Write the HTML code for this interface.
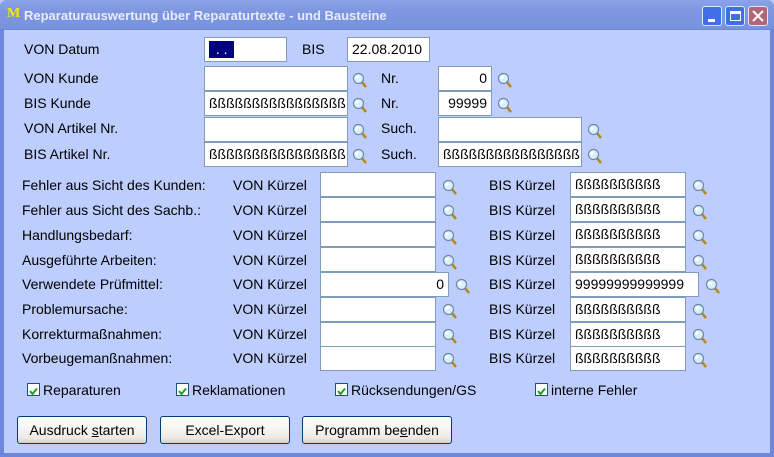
<!DOCTYPE html>
<html><head><meta charset="utf-8"><style>
*{margin:0;padding:0;box-sizing:border-box}
body{width:774px;height:457px;overflow:hidden;font-family:"Liberation Sans",Arial,sans-serif;font-size:14px;color:#000;background:#bccbfc}
.win{position:absolute;left:0;top:0;width:774px;height:457px;background:#bdcdfd;border:4px solid #6f86dc;border-top:0;border-radius:7px 7px 0 0}
.tb{position:absolute;left:0;top:0;width:774px;height:30px;background:linear-gradient(#8aa3e8,#7d96df 40%,#7893dd);border-radius:7px 7px 0 0;border-bottom:1px solid #6e86d6}
.tt{position:absolute;left:24px;top:8px;color:#e6ecfb;font-weight:bold;font-size:13px}
.logo{position:absolute;left:7px;top:6px;color:#f8e800;font-family:"Liberation Serif",serif;font-weight:bold;font-size:14px}
.b{position:absolute;top:6px;width:20px;height:20px;border:1px solid #dfe6fb;border-radius:3px;background:#3f6ee6}
.t{position:absolute;white-space:nowrap;line-height:16px}
.i{position:absolute;background:#fff;border:1px solid #7f9db9;height:25px;line-height:23px;padding:0 4px;white-space:nowrap;overflow:hidden;font-size:14px}
.r{text-align:right}
.m{position:absolute;width:16px;height:16px}
.cb{position:absolute;width:13px;height:13px;border:1px solid #1c5180;background:#fff}
.btn{position:absolute;top:416px;height:28px;border:1px solid #003c74;border-radius:3px;background:linear-gradient(#fff,#ecebe6 80%,#d6d0c5);text-align:center;line-height:26px;font-size:14px}
</style></head><body>
<div class="win"></div>
<div class="tb"><span class="logo">M</span><span class="tt">Reparaturauswertung über Reparaturtexte - und Bausteine</span>
<div class="b" style="left:702px"><div style="position:absolute;left:5px;top:12px;width:7px;height:3px;background:#fff"></div></div>
<div class="b" style="left:725px"><div style="position:absolute;left:4px;top:4px;width:11px;height:10px;border:1px solid #fff;border-top-width:3px"></div></div>
<div class="b" style="left:748px;background:#b36676"><svg width="18" height="18" style="position:absolute;left:0;top:0"><path d="M4 4L14 14M14 4L4 14" stroke="#fff" stroke-width="2"/></svg></div>
</div>
<svg width="0" height="0" style="position:absolute"><defs><g id="mg"><line x1="9" y1="9" x2="14" y2="15" stroke="#b8860b" stroke-width="2.5"/><circle cx="6.5" cy="6.5" r="5" fill="#dbeefb" stroke="#6a8aa8" stroke-width="1.2"/><circle cx="5" cy="5" r="1.8" fill="#fff"/></g></defs></svg>

<span class="t" style="left:24px;top:41px">VON Datum</span>
<div class="i" style="left:204px;top:37px;width:83px;height:25px"><span style="background:#000080;color:#fff;padding:0 3px;display:inline-block;line-height:17px;margin-top:3px;vertical-align:top">&nbsp;. .&nbsp;</span></div>
<span class="t" style="left:302px;top:41px">BIS</span>
<div class="i" style="left:347px;top:37px;width:83px">22.08.2010</div>

<span class="t" style="left:24px;top:70px">VON Kunde</span>
<div class="i" style="left:204px;top:66px;width:144px"></div>
<svg class="m" style="left:352px;top:72px"><use href="#mg"/></svg>
<span class="t" style="left:381px;top:70px">Nr.</span>
<div class="i r" style="left:438px;top:66px;width:54px">0</div>
<svg class="m" style="left:497px;top:72px"><use href="#mg"/></svg>

<span class="t" style="left:24px;top:95px">BIS Kunde</span>
<div class="i" style="left:204px;top:91px;width:144px">ßßßßßßßßßßßßßßßß</div>
<svg class="m" style="left:352px;top:97px"><use href="#mg"/></svg>
<span class="t" style="left:381px;top:95px">Nr.</span>
<div class="i r" style="left:438px;top:91px;width:54px">99999</div>
<svg class="m" style="left:497px;top:97px"><use href="#mg"/></svg>

<span class="t" style="left:24px;top:120px">VON Artikel Nr.</span>
<div class="i" style="left:204px;top:117px;width:144px"></div>
<svg class="m" style="left:352px;top:123px"><use href="#mg"/></svg>
<span class="t" style="left:381px;top:120px">Such.</span>
<div class="i" style="left:438px;top:117px;width:144px"></div>
<svg class="m" style="left:587px;top:123px"><use href="#mg"/></svg>

<span class="t" style="left:24px;top:146px">BIS Artikel Nr.</span>
<div class="i" style="left:204px;top:142px;width:144px">ßßßßßßßßßßßßßßßß</div>
<svg class="m" style="left:352px;top:148px"><use href="#mg"/></svg>
<span class="t" style="left:381px;top:146px">Such.</span>
<div class="i" style="left:438px;top:142px;width:144px">ßßßßßßßßßßßßßßßß</div>
<svg class="m" style="left:587px;top:148px"><use href="#mg"/></svg>

<!-- error rows -->
<div id="rows"></div>
<span class="t" style="left:22px;top:177px">Fehler aus Sicht des Kunden:</span>
<span class="t" style="left:22px;top:202px">Fehler aus Sicht des Sachb.:</span>
<span class="t" style="left:22px;top:227px">Handlungsbedarf:</span>
<span class="t" style="left:22px;top:252px">Ausgeführte Arbeiten:</span>
<span class="t" style="left:22px;top:276px">Verwendete Prüfmittel:</span>
<span class="t" style="left:22px;top:301px">Problemursache:</span>
<span class="t" style="left:22px;top:326px">Korrekturmaßnahmen:</span>
<span class="t" style="left:22px;top:350px">Vorbeugemanßnahmen:</span>

<span class="t" style="left:233px;top:177px">VON Kürzel</span><div class="i" style="left:320px;top:172px;width:116px"></div><svg class="m" style="left:442px;top:179px"><use href="#mg"/></svg>
<span class="t" style="left:489px;top:177px">BIS Kürzel</span><div class="i" style="left:570px;top:172px;width:116px">ßßßßßßßßßß</div><svg class="m" style="left:692px;top:179px"><use href="#mg"/></svg>

<span class="t" style="left:233px;top:202px">VON Kürzel</span><div class="i" style="left:320px;top:197px;width:116px"></div><svg class="m" style="left:442px;top:204px"><use href="#mg"/></svg>
<span class="t" style="left:489px;top:202px">BIS Kürzel</span><div class="i" style="left:570px;top:197px;width:116px">ßßßßßßßßßß</div><svg class="m" style="left:692px;top:204px"><use href="#mg"/></svg>

<span class="t" style="left:233px;top:227px">VON Kürzel</span><div class="i" style="left:320px;top:222px;width:116px"></div><svg class="m" style="left:442px;top:229px"><use href="#mg"/></svg>
<span class="t" style="left:489px;top:227px">BIS Kürzel</span><div class="i" style="left:570px;top:222px;width:116px">ßßßßßßßßßß</div><svg class="m" style="left:692px;top:229px"><use href="#mg"/></svg>

<span class="t" style="left:233px;top:252px">VON Kürzel</span><div class="i" style="left:320px;top:247px;width:116px"></div><svg class="m" style="left:442px;top:254px"><use href="#mg"/></svg>
<span class="t" style="left:489px;top:252px">BIS Kürzel</span><div class="i" style="left:570px;top:247px;width:116px">ßßßßßßßßßß</div><svg class="m" style="left:692px;top:254px"><use href="#mg"/></svg>

<span class="t" style="left:233px;top:276px">VON Kürzel</span><div class="i r" style="left:320px;top:272px;width:129px">0</div><svg class="m" style="left:455px;top:278px"><use href="#mg"/></svg>
<span class="t" style="left:489px;top:276px">BIS Kürzel</span><div class="i" style="left:570px;top:272px;width:129px">99999999999999</div><svg class="m" style="left:705px;top:278px"><use href="#mg"/></svg>

<span class="t" style="left:233px;top:301px">VON Kürzel</span><div class="i" style="left:320px;top:297px;width:116px"></div><svg class="m" style="left:442px;top:303px"><use href="#mg"/></svg>
<span class="t" style="left:489px;top:301px">BIS Kürzel</span><div class="i" style="left:570px;top:297px;width:116px">ßßßßßßßßßß</div><svg class="m" style="left:692px;top:303px"><use href="#mg"/></svg>

<span class="t" style="left:233px;top:326px">VON Kürzel</span><div class="i" style="left:320px;top:322px;width:116px"></div><svg class="m" style="left:442px;top:328px"><use href="#mg"/></svg>
<span class="t" style="left:489px;top:326px">BIS Kürzel</span><div class="i" style="left:570px;top:322px;width:116px">ßßßßßßßßßß</div><svg class="m" style="left:692px;top:328px"><use href="#mg"/></svg>

<span class="t" style="left:233px;top:350px">VON Kürzel</span><div class="i" style="left:320px;top:346px;width:116px"></div><svg class="m" style="left:442px;top:352px"><use href="#mg"/></svg>
<span class="t" style="left:489px;top:350px">BIS Kürzel</span><div class="i" style="left:570px;top:346px;width:116px">ßßßßßßßßßß</div><svg class="m" style="left:692px;top:352px"><use href="#mg"/></svg>

<div class="cb" style="left:27px;top:383px"><svg width="11" height="11"><path d="M2 5L4.5 8L9 2.5" stroke="#21a121" stroke-width="2" fill="none"/></svg></div><span class="t" style="left:43px;top:382px">Reparaturen</span>
<div class="cb" style="left:176px;top:383px"><svg width="11" height="11"><path d="M2 5L4.5 8L9 2.5" stroke="#21a121" stroke-width="2" fill="none"/></svg></div><span class="t" style="left:192px;top:382px">Reklamationen</span>
<div class="cb" style="left:335px;top:383px"><svg width="11" height="11"><path d="M2 5L4.5 8L9 2.5" stroke="#21a121" stroke-width="2" fill="none"/></svg></div><span class="t" style="left:351px;top:382px">Rücksendungen/GS</span>
<div class="cb" style="left:535px;top:383px"><svg width="11" height="11"><path d="M2 5L4.5 8L9 2.5" stroke="#21a121" stroke-width="2" fill="none"/></svg></div><span class="t" style="left:551px;top:382px">interne Fehler</span>

<div class="btn" style="left:17px;width:130px">Ausdruck <u>s</u>tarten</div>
<div class="btn" style="left:160px;width:130px">Excel-Export</div>
<div class="btn" style="left:302px;width:150px">Programm be<u>e</u>nden</div>
</body></html>
